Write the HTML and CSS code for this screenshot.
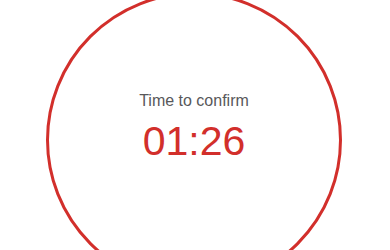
FILE: index.html
```html
<!DOCTYPE html>
<html lang="en">
<head>
<meta charset="utf-8">
<title>Time to confirm</title>
<link rel="stylesheet" href="styles.css">
</head>
<body>
<main class="screen">
  <div class="ring">
    <p class="label">Time to confirm</p>
    <p class="timer">01:26</p>
  </div>
</main>
</body>
</html>
```
FILE: styles.css
```css
html, body {
  margin: 0;
  padding: 0;
  background: #ffffff;
}
.screen {
  width: 390px;
  height: 250px;
  overflow: hidden;
  display: flex;
  flex-direction: column;
  align-items: flex-start;
  font-family: "Liberation Sans", Arial, sans-serif;
}
.ring {
  box-sizing: border-box;
  flex: none;
  width: 296px;
  height: 296px;
  margin: -8px 0 0 46px;
  border: 3px solid #d22f2b;
  border-radius: 50%;
  display: flex;
  flex-direction: column;
  align-items: center;
  padding-top: 96px;
}
.label {
  margin: 0;
  font-size: 16px;
  line-height: 19px;
  color: #58585a;
}
.timer {
  margin: 7px 0 0;
  font-size: 41px;
  line-height: 48px;
  color: #d22f2b;
}
```
